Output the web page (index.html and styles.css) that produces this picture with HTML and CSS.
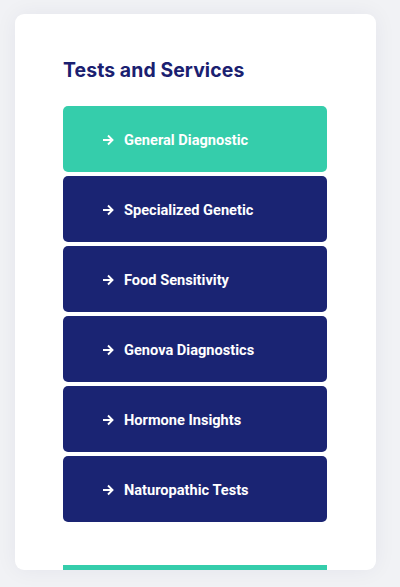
FILE: index.html
```html
<!DOCTYPE html>
<html>
<head>
<meta charset="utf-8">
<link rel="stylesheet" href="styles.css">
</head>
<body>
<div class="card">
  <h2 class="title">Tests and Services</h2>
  <ul class="list">
    <li class="item active"><svg class="arrow" viewBox="0 0 12 12" width="12" height="12"><path d="M1 6h9.5M6 1.5L10.5 6 6 10.5" fill="none" stroke="#fff" stroke-width="1.9"/></svg><span>General Diagnostic</span></li>
    <li class="item"><svg class="arrow" viewBox="0 0 12 12" width="12" height="12"><path d="M1 6h9.5M6 1.5L10.5 6 6 10.5" fill="none" stroke="#fff" stroke-width="1.9"/></svg><span>Specialized Genetic</span></li>
    <li class="item"><svg class="arrow" viewBox="0 0 12 12" width="12" height="12"><path d="M1 6h9.5M6 1.5L10.5 6 6 10.5" fill="none" stroke="#fff" stroke-width="1.9"/></svg><span>Food Sensitivity</span></li>
    <li class="item"><svg class="arrow" viewBox="0 0 12 12" width="12" height="12"><path d="M1 6h9.5M6 1.5L10.5 6 6 10.5" fill="none" stroke="#fff" stroke-width="1.9"/></svg><span>Genova Diagnostics</span></li>
    <li class="item"><svg class="arrow" viewBox="0 0 12 12" width="12" height="12"><path d="M1 6h9.5M6 1.5L10.5 6 6 10.5" fill="none" stroke="#fff" stroke-width="1.9"/></svg><span>Hormone Insights</span></li>
    <li class="item"><svg class="arrow" viewBox="0 0 12 12" width="12" height="12"><path d="M1 6h9.5M6 1.5L10.5 6 6 10.5" fill="none" stroke="#fff" stroke-width="1.9"/></svg><span>Naturopathic Tests</span></li>
  </ul>
  <div class="bar"></div>
</div>
</body>
</html>
```
FILE: styles.css
```css
html, body {
  margin: 0;
  padding: 0;
}
body {
  background: #f1f2f5;
  width: 400px;
  height: 587px;
  overflow: hidden;
  font-family: Roboto, "Liberation Sans", sans-serif;
}
.card {
  margin: 14px 0 0 15px;
  width: 361px;
  height: 556px;
  background: #fff;
  border-radius: 9px;
  box-shadow: 0 0 22px rgba(30, 35, 80, 0.06);
  box-sizing: border-box;
  padding: 43px 0 0 48px;
  overflow: hidden;
  display: flex;
  flex-direction: column;
}
.title {
  margin: 0;
  font-family: Inter, "Noto Sans", sans-serif;
  font-size: 19.4px;
  font-weight: 700;
  line-height: 26px;
  color: #1a2070;
  letter-spacing: 0.1px;
}
.list {
  list-style: none;
  margin: 23px 0 0 0;
  padding: 0;
  width: 264px;
  display: flex;
  flex-direction: column;
  gap: 4px;
}
.item {
  height: 66px;
  box-sizing: border-box;
  background: #1a2473;
  border-radius: 5px;
  display: flex;
  align-items: center;
  padding: 2px 0 0 39px;
  color: #fff;
  font-size: 14.6px;
  font-weight: 700;
}
.item.active {
  background: #35cdab;
}
.arrow {
  margin-right: 10px;
  flex: none;
}
.bar {
  flex: none;
  margin-top: 43px;
  width: 264px;
  height: 6px;
  background: #35cdab;
}
```
